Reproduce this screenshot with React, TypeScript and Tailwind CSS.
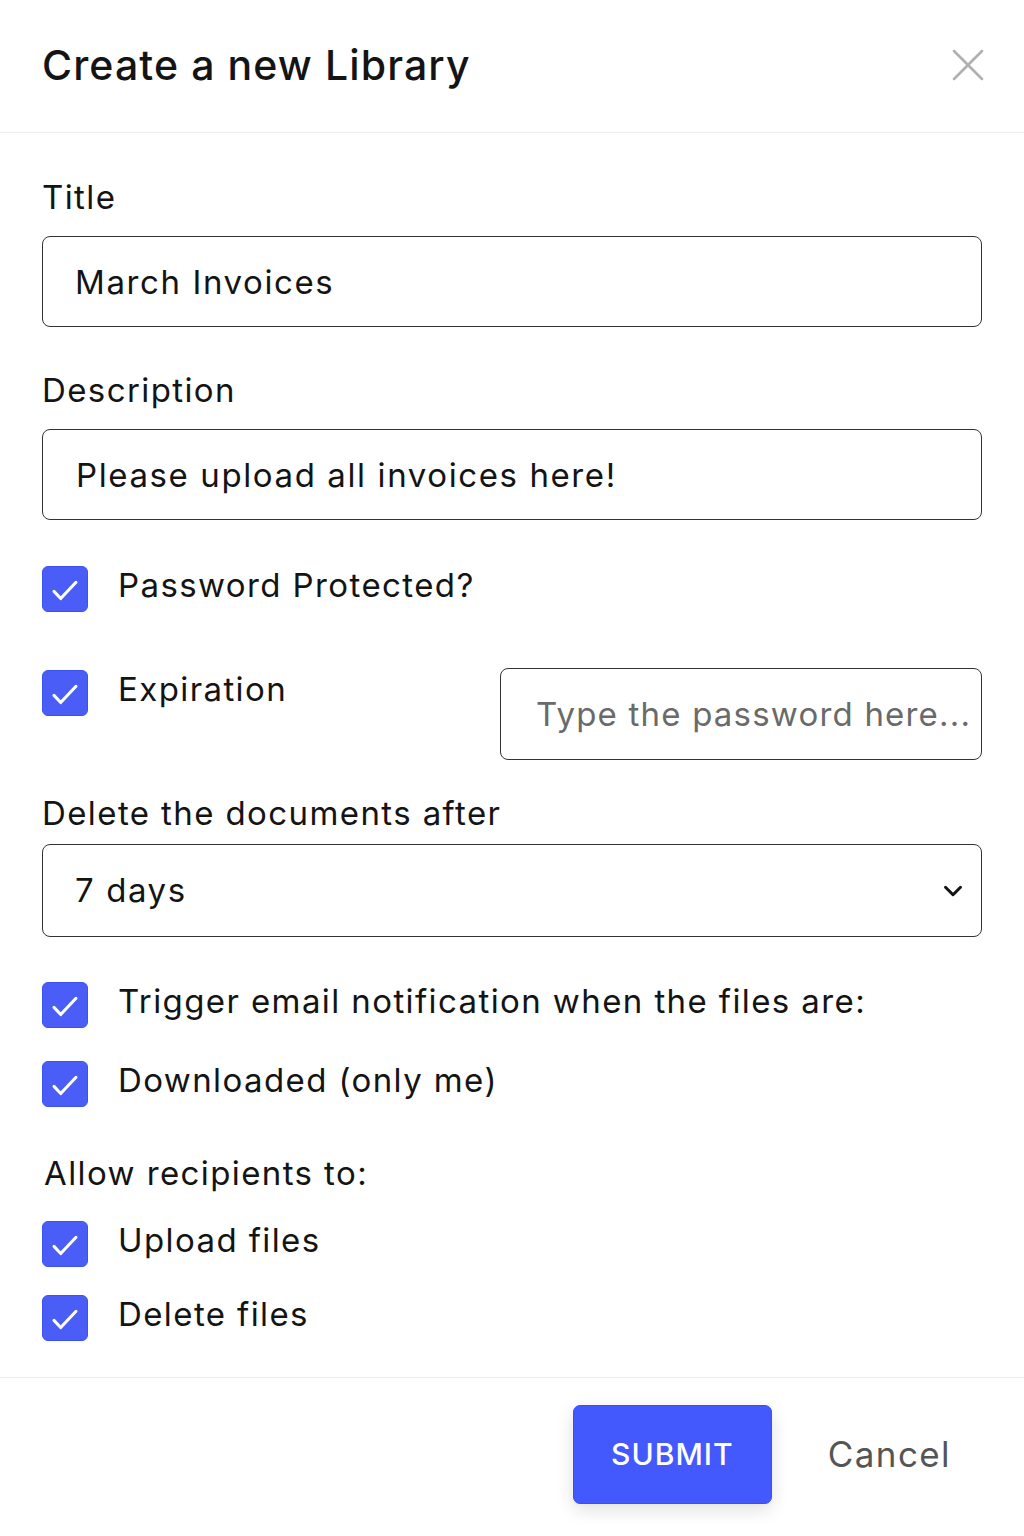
import { X, ChevronDown } from 'lucide-react'

const font = { fontFamily: 'Inter, "Noto Sans", sans-serif' }

function Check() {
  return (
    <div className="w-[46px] h-[46px] shrink-0 rounded-[6px] bg-[#4a5ef7] border border-[#3c52f0] flex items-center justify-center">
      <svg width="46" height="46" viewBox="0 0 46 46" fill="none">
        <polyline points="11.5,25.5 18.5,33 34.5,16" stroke="white" strokeWidth="3.2" strokeLinecap="round" strokeLinejoin="round" />
      </svg>
    </div>
  )
}

function CheckRow({ label, className = '' }: { label: string; className?: string }) {
  return (
    <div className={`flex items-start ${className}`}>
      <Check />
      <span className="ml-[30px] text-[33px] tracking-[1.4px] leading-[40px] text-[#141414] -mt-[1px] whitespace-nowrap">{label}</span>
    </div>
  )
}

export default function App() {
  return (
    <div className="w-[1024px] h-[1536px] bg-white flex flex-col" style={font}>
      {/* header */}
      <div className="h-[133px] shrink-0 px-[42px] flex items-center justify-between border-b border-[#ededed]">
        <h1 className="text-[41px] font-medium text-[#141414] tracking-[1.1px]">Create a new Library</h1>
        <X size={56} strokeWidth={1.1} className="text-[#b0b0b0] -mr-[14px] -mt-[2px]" />
      </div>

      {/* body */}
      <div className="flex-1 px-[42px] pt-[44px]">
        <label className="block text-[33px] tracking-[1.4px] leading-[40px] text-[#141414]">Title</label>
        <input
          readOnly
          defaultValue="March Invoices"
          className="mt-[19px] w-full h-[91px] rounded-[8px] border border-[#333] pl-[32px] text-[33px] tracking-[1.6px] text-[#141414] outline-none"
        />

        <label className="block mt-[43px] text-[33px] tracking-[1.4px] leading-[40px] text-[#141414]">Description</label>
        <input
          readOnly
          defaultValue="Please upload all invoices here!"
          className="mt-[19px] w-full h-[91px] rounded-[8px] border border-[#333] pl-[33px] text-[33px] tracking-[1.6px] text-[#141414] outline-none"
        />

        <CheckRow label="Password Protected?" className="mt-[46px]" />

        <div className="mt-[56px] flex items-start justify-between">
          <CheckRow label="Expiration" className="mt-[2px]" />
          <input
            readOnly
            placeholder="Type the password here..."
            className="w-[482px] h-[92px] rounded-[8px] border border-[#333] pl-[35px] pr-[4px] text-[33px] tracking-[1.2px] text-[#141414] placeholder:text-[#6a6a6a] outline-none"
          />
        </div>

        <label className="block mt-[33px] text-[33px] tracking-[1.4px] leading-[40px] text-[#141414]">Delete the documents after</label>
        <div className="mt-[11px] w-full h-[93px] rounded-[8px] border border-[#333] pl-[32px] pr-[13px] flex items-center justify-between">
          <span className="text-[33px] tracking-[1.6px] text-[#141414]">7 days</span>
          <ChevronDown size={30} strokeWidth={2.4} className="text-[#141414]" />
        </div>

        <CheckRow label="Trigger email notification when the files are:" className="mt-[45px]" />
        <CheckRow label="Downloaded (only me)" className="mt-[33px]" />

        <label className="block mt-[46px] ml-[2px] text-[33px] tracking-[1.4px] leading-[40px] text-[#141414]">Allow recipients to:</label>
        <CheckRow label="Upload files" className="mt-[28px]" />
        <CheckRow label="Delete files" className="mt-[28px]" />
      </div>

      {/* footer */}
      <div className="h-[159px] shrink-0 border-t border-[#ededed] flex items-start justify-end pt-[27px] pr-[73px]">
        <button className="w-[199px] h-[99px] rounded-[7px] bg-[#4359fd] border border-[#3a50f0] text-white text-[30px] tracking-[1px] font-medium shadow-[0_6px_18px_rgba(0,0,0,0.12)]">
          SUBMIT
        </button>
        <button className="ml-[56px] h-[99px] text-[35px] tracking-[1.4px] text-[#555]">Cancel</button>
      </div>
    </div>
  )
}
